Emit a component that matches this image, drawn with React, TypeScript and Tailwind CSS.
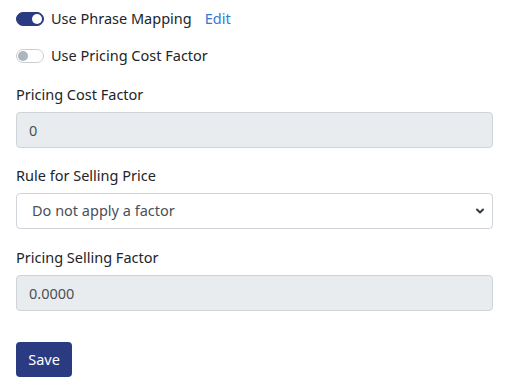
import { useState } from "react";

function Toggle({ on }: { on: boolean }) {
  return (
    <span
      className={
        "relative inline-flex h-[14px] w-[28px] shrink-0 items-center rounded-full border " +
        (on ? "border-[#2b3b82] bg-[#2b3b82]" : "border-[#c9ced4] bg-white")
      }
    >
      <span
        className={
          "absolute h-[10px] w-[10px] rounded-full " +
          (on ? "right-[1px] bg-white" : "left-[1px] bg-[#adb5bd]")
        }
      />
    </span>
  );
}

export default function App() {
  const [rule, setRule] = useState("none");

  return (
    <div className="min-h-[388px] bg-white pl-4 pr-[19px] text-[14.5px] text-[#212529] font-['Noto_Sans',sans-serif]">
      {/* SWITCHES */}
      <div className="flex h-[37px] items-center gap-[7px] pt-[1px]">
        <Toggle on />
        <span>Use Phrase Mapping</span>
        <a className="ml-[6px] text-[#2f7bd6]">Edit</a>
      </div>
      <div className="flex h-[38px] items-center gap-[7px]">
        <Toggle on={false} />
        <span>Use Pricing Cost Factor</span>
      </div>

      {/* FIELDS */}
      <div className="mt-[8px]">
        <label className="block leading-[22px]">Pricing Cost Factor</label>
        <input
          disabled
          value="0"
          readOnly
          className="mt-[7px] block h-[36px] w-full rounded-[4px] border border-[#ced4da] bg-[#e9ecef] px-[12px] text-[#495057]"
        />
      </div>

      <div className="mt-[16px]">
        <label className="block leading-[22px]">Rule for Selling Price</label>
        <div className="relative mt-[7px]">
          <select
            value={rule}
            onChange={(e) => setRule(e.target.value)}
            className="block h-[36px] w-full appearance-none rounded-[4px] border border-[#ced4da] bg-white px-[15px] text-[#495057]"
          >
            <option value="none">Do not apply a factor</option>
            <option value="multiply">Multiply by factor</option>
          </select>
          <svg
            className="pointer-events-none absolute right-[8px] top-[14px] h-[8px] w-[10px]"
            viewBox="0 0 10 8"
            fill="none"
            stroke="#343a40"
            strokeWidth="2"
            strokeLinecap="round"
            strokeLinejoin="round"
          >
            <path d="M2 2.5l3 3 3-3" />
          </svg>
        </div>
      </div>

      <div className="mt-[17px]">
        <label className="block leading-[22px]">Pricing Selling Factor</label>
        <input
          disabled
          value="0.0000"
          readOnly
          className="mt-[7px] block h-[36px] w-full rounded-[4px] border border-[#ced4da] bg-[#e9ecef] px-[12px] text-[#495057]"
        />
      </div>

      <button className="mt-[31px] h-[35px] w-[56px] rounded-[4px] bg-[#2b3b82] text-white">Save</button>
    </div>
  );
}
